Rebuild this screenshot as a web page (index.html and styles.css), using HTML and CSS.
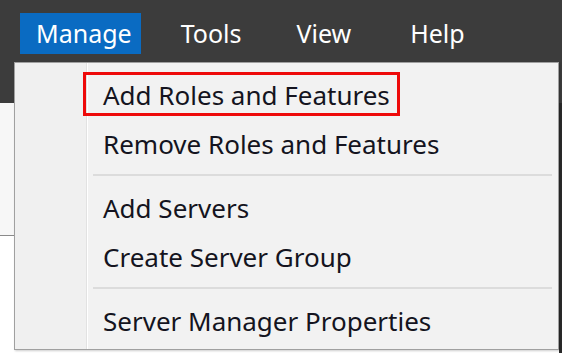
FILE: index.html
```html
<!DOCTYPE html>
<html lang="en">
<head>
    <meta charset="UTF-8" />
    <title>Server Manager - Manage menu</title>
    <link rel="stylesheet" href="styles.css">
</head>
<body>
    <div class="window">
        <div class="menubar">
            <span class="menubar-item active">Manage</span>
            <span class="menubar-item tools">Tools</span>
            <span class="menubar-item view">View</span>
            <span class="menubar-item">Help</span>
        </div>
        <div class="page">
            <div class="page-strip"></div>
        </div>

        <div class="dropdown">
            <div class="gutter"></div>
            <ul class="items">
                <li class="item highlighted">Add Roles and Features</li>
                <li class="item">Remove Roles and Features</li>
                <li class="separator"></li>
                <li class="item">Add Servers</li>
                <li class="item">Create Server Group</li>
                <li class="separator"></li>
                <li class="item">Server Manager Properties</li>
            </ul>
        </div>
    </div>
</body>
</html>
```

FILE: styles.css
```css
body {
    margin: 0;
    font-family: "Noto Sans", "Open Sans", sans-serif;
    background: #ffffff;
}
.window {
    position: relative;
    width: 562px;
    height: 353px;
    overflow: hidden;
}
.menubar {
    display: flex;
    align-items: flex-start;
    height: 103px;
    background: #3c3c3c;
    padding: 13px 0 0 20px;
    box-sizing: border-box;
}
.menubar-item {
    color: #ffffff;
    font-size: 25px;
    height: 41px;
    line-height: 41px;
}
.menubar-item.active {
    background: #0a6bc2;
    padding: 0 9px 0 16px;
    margin-right: 40px;
}
.menubar-item.tools {
    margin-right: 55px;
}
.menubar-item.view {
    margin-right: 59px;
}
.page {
    height: 250px;
    border-right: 3px solid #2a2a2a;
}
.page-strip {
    width: 14px;
    height: 132px;
    background: #f7f7f7;
    border-bottom: 1px solid #8a8a8a;
}
.dropdown {
    position: absolute;
    left: 14px;
    top: 62px;
    width: 545px;
    height: 288px;
    display: flex;
    background: #f2f2f2;
    border: 1px solid #a0a0a0;
    box-shadow: 1px 1px 2px rgba(0, 0, 0, 0.2);
    box-sizing: border-box;
}
.gutter {
    width: 71px;
    background: #f0f0f0;
    border-right: 1px solid #e2e2e2;
    box-shadow: 1px 0 0 #ffffff;
}
.items {
    flex: 1;
    list-style: none;
    margin: 0;
    padding: 8px 0 0 0;
}
.item {
    position: relative;
    height: 49px;
    line-height: 49px;
    padding-left: 16px;
    font-size: 26px;
    color: #141420;
}
.item.highlighted::after {
    content: "";
    position: absolute;
    left: -4px;
    top: 1px;
    width: 311px;
    height: 38px;
    border: 3px solid #ee0a0a;
}
.separator {
    height: 2px;
    margin: 5px 6px 8px 6px;
    background: #dcdcdc;
}
```
